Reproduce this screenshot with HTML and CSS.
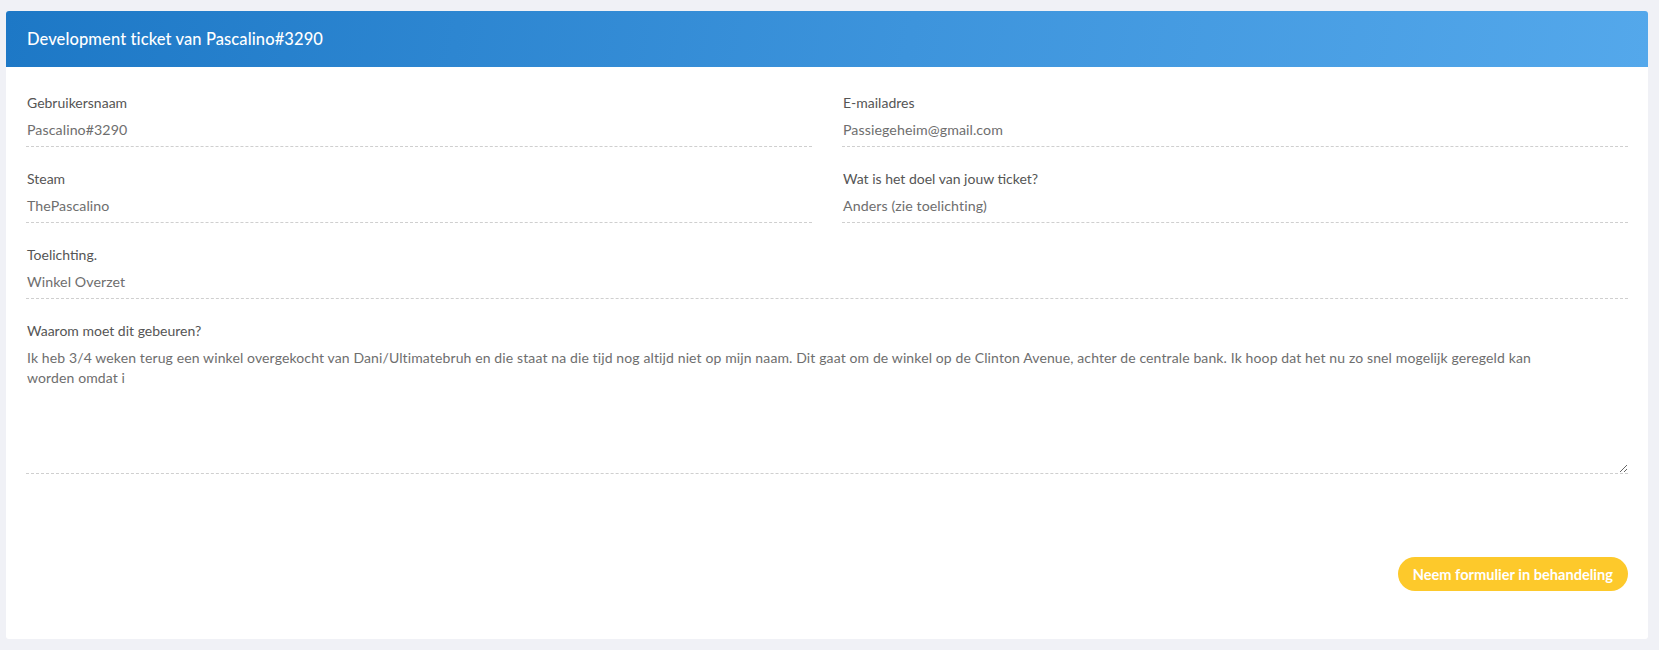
FILE: index.html
```html
<!DOCTYPE html>
<html lang="nl">
<head>
<meta charset="utf-8">
<title>Development ticket</title>
<link rel="stylesheet" href="styles.css">
</head>
<body>
<div class="page">
  <div class="card">
    <div class="card-header">Development ticket van Pascalino#3290</div>
    <div class="card-body">
      <div class="grid">
        <div class="field">
          <label class="label">Gebruikersnaam</label>
          <div class="value">Pascalino#3290</div>
        </div>
        <div class="field">
          <label class="label">E-mailadres</label>
          <div class="value">Passiegeheim@gmail.com</div>
        </div>
        <div class="field">
          <label class="label">Steam</label>
          <div class="value">ThePascalino</div>
        </div>
        <div class="field">
          <label class="label">Wat is het doel van jouw ticket?</label>
          <div class="value">Anders (zie toelichting)</div>
        </div>
        <div class="field full">
          <label class="label">Toelichting.</label>
          <div class="value">Winkel Overzet</div>
        </div>
        <div class="field full">
          <label class="label">Waarom moet dit gebeuren?</label>
          <textarea class="area" readonly>Ik heb 3/4 weken terug een winkel overgekocht van Dani/Ultimatebruh en die staat na die tijd nog altijd niet op mijn naam. Dit gaat om de winkel op de Clinton Avenue, achter de centrale bank. Ik hoop dat het nu zo snel mogelijk geregeld kan worden omdat i</textarea>
        </div>
      </div>
      <div class="actions">
        <button class="btn" type="button">Neem formulier in behandeling</button>
      </div>
    </div>
  </div>
</div>
</body>
</html>
```

FILE: styles.css
```css
* { box-sizing: border-box; }
html, body { margin: 0; padding: 0; }
body {
  background: #f0f1f6;
  font-family: "Lato", "Noto Sans", sans-serif;
  color: #555;
}
.page {
  padding: 11px 11px 11px 6px;
}
.card {
  background: #fff;
  border-radius: 3px;
  overflow: hidden;
}
.card-header {
  height: 56px;
  display: flex;
  align-items: center;
  padding-left: 21px;
  color: #fff;
  font-size: 16.5px;
  font-weight: 500;
  letter-spacing: 0.1px;
  background: linear-gradient(100deg, #1d78c6 0%, #3d94dc 55%, #54a8eb 100%);
}
.card-body {
  padding: 26px 20px 48px 20px;
}
.grid {
  display: grid;
  grid-template-columns: 1fr 1fr;
  column-gap: 30px;
  row-gap: 22px;
}
.field.full { grid-column: 1 / -1; }
.label {
  display: block;
  height: 20px;
  line-height: 20px;
  font-size: 14px;
  color: #555;
  padding-left: 1px;
}
.value {
  height: 34px;
  line-height: 34px;
  font-size: 14.2px;
  letter-spacing: 0.08px;
  color: #6e6e6e;
  padding-left: 1px;
  border-bottom: 1px dashed #cfcfcf;
}
.area {
  display: block;
  width: 100%;
  height: 133px;
  margin: 0;
  padding: 7px 70px 0 1px;
  border: none;
  border-bottom: 1px dashed #cfcfcf;
  font-family: inherit;
  font-size: 14px;
  letter-spacing: 0.12px;
  line-height: 20px;
  color: #6e6e6e;
  resize: vertical;
  outline: none;
  background: #fff;
}
.actions {
  display: flex;
  justify-content: flex-end;
  margin-top: 83px;
}
.btn {
  height: 34px;
  padding: 0 15px;
  border: none;
  border-radius: 17px;
  background: #fdc92b;
  color: #fff;
  font-family: inherit;
  font-size: 14.6px;
  font-weight: 700;
}
```
